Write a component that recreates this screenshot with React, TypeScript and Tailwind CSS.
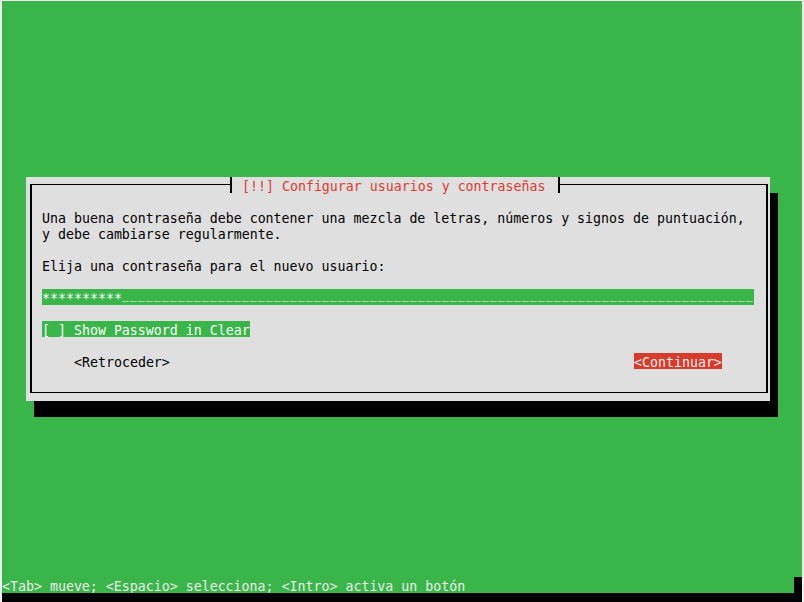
export default function App() {
  const underscores = "_".repeat(79);
  return (
    <div className="w-[804px] h-[602px] bg-[#f0f0f0] pl-[2px] pt-[1px] font-['DejaVu_Sans_Mono','Liberation_Mono',monospace] text-[13.288px] leading-[20px] text-black">
      <div className="w-[800px] h-[601px] flex flex-col">
        <div className="h-[576px] bg-[#3ab54a] pl-[24px] pt-[176px]">
          <div className="w-[744px] h-[224px] bg-[#dfdfdf] shadow-[8px_16px_0_0_#000] pl-[4px] pr-[2px] flex flex-col">
            <div className="h-4 flex">
              <div className="w-[200px] mt-[7px] border-t border-l-2 border-black" />
              <div className="w-[2px] bg-black" />
              <div className="w-[326px] pl-[10px] text-[#dc3a2c] whitespace-pre">[!!] Configurar usuarios y contraseñas</div>
              <div className="w-[2px] bg-black" />
              <div className="flex-1 mt-[7px] border-t border-r-2 border-black" />
            </div>
            <div className="h-[200px] border-l-2 border-r-2 border-b border-black pl-[10px] pt-4 flex flex-col">
              <div className="h-4 whitespace-pre">Una buena contraseña debe contener una mezcla de letras, números y signos de puntuación,</div>
              <div className="h-4 whitespace-pre">y debe cambiarse regularmente.</div>
              <div className="h-4" />
              <div className="h-4 whitespace-pre">Elija una contraseña para el nuevo usuario:</div>
              <div className="h-4" />
              <div className="h-4 w-[712px] bg-[#3ab54a] text-white whitespace-pre flex">
                <span className="w-[80px] shrink-0">**********</span>
                <span className="relative top-[-3px] text-[11px] tracking-[1.377px] w-[632px] shrink-0">{underscores}</span>
              </div>
              <div className="h-4" />
              <div className="h-4 w-[208px] bg-[#3ab54a] text-white whitespace-pre">[ ] Show Password in Clear</div>
              <div className="h-4" />
              <div className="h-4 flex">
                <div className="ml-[32px] w-[96px] whitespace-pre">&lt;Retroceder&gt;</div>
                <div className="ml-[464px] w-[88px] bg-[#d63b2b] text-[#f2f2f2] whitespace-pre">&lt;Continuar&gt;</div>
              </div>
            </div>
          </div>
        </div>
        <div className="h-4 flex">
          <div className="w-[792px] bg-[#3ab54a] text-[#ececec] whitespace-pre">&lt;Tab&gt; mueve; &lt;Espacio&gt; selecciona; &lt;Intro&gt; activa un botón</div>
          <div className="flex-1 bg-black" />
        </div>
        <div className="h-[9px] bg-black" />
      </div>
    </div>
  );
}
